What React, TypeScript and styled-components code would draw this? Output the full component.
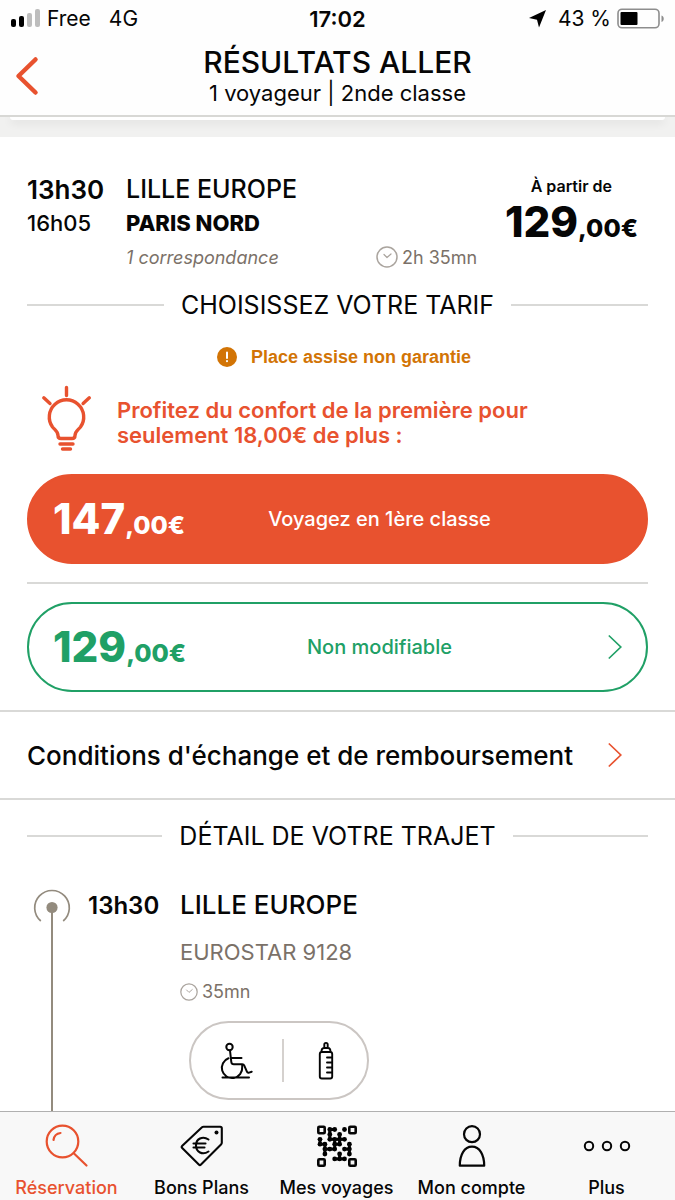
import React from "react";
import styled, { createGlobalStyle } from "styled-components";

const color = {
  orange: "#e8522f",
  green: "#20a066",
  amber: "#d27405",
  taupe: "#7b7168",
  rule: "#d9d9d7",
  ink: "#060606",
};

const GlobalStyle = createGlobalStyle`
  *, *::before, *::after { box-sizing: border-box; }
  body { margin: 0; background: #fff; color: ${color.ink}; font-family: Inter, "Liberation Sans", sans-serif; }
  h1, h2, h3, p { margin: 0; font-weight: 400; }
  button { font: inherit; color: inherit; border: 0; padding: 0; background: none; cursor: pointer; }
  a { color: inherit; text-decoration: none; }
  svg { display: block; flex: none; }
`;

const Screen = styled.div`
  display: flex;
  flex-direction: column;
  min-height: 100vh;
`;

const TopBar = styled.header`
  background: #fefefe;
  border-bottom: 2px solid #d8d8d5;
`;

const StatusBar = styled.div`
  display: grid;
  grid-template-columns: 1fr auto 1fr;
  align-items: center;
  height: 37px;
  padding: 0 10px;
  font-size: 21px;
`;

const StatusGroup = styled.div<{ $end?: boolean }>`
  display: flex;
  align-items: center;
  gap: 6px;
  justify-content: ${(p) => (p.$end ? "flex-end" : "flex-start")};
`;

const Network = styled.span`
  margin-left: 12px;
`;

const Clock = styled.time`
  font-size: 22px;
  font-weight: 600;
`;

const TitleBar = styled.div`
  display: grid;
  grid-template-columns: 48px 1fr 48px;
  align-items: center;
  height: 78px;
`;

const BackButton = styled.button`
  display: flex;
  justify-content: center;
  padding-left: 6px;
`;

const Heading = styled.div`
  text-align: center;
`;

const Title = styled.h1`
  font-size: 30px;
  line-height: 34px;
  font-weight: 500;
`;

const Subtitle = styled.p`
  font-size: 22px;
  line-height: 28px;
`;

const CardGap = styled.div`
  height: 20px;
  padding: 0 10px;
  overflow: hidden;
  background: #f1f1f0;
`;

const PreviousCard = styled.div`
  height: 3px;
  border-radius: 0 0 8px 8px;
  background: #fff;
  box-shadow: 0 2px 10px rgba(0, 0, 0, 0.14);
`;

const Main = styled.main`
  display: flex;
  flex: 1;
  flex-direction: column;
`;

const Offer = styled.section`
  padding: 35px 27px 18px;
  border-bottom: 2px solid ${color.rule};
`;

const Summary = styled.div`
  display: flex;
  justify-content: space-between;
`;

const Stops = styled.div`
  display: grid;
  grid-template-columns: 99px 250px auto;
  grid-template-rows: 34px 34px 34px;
  align-items: center;
`;

const Departure = styled.span<{ $bold?: boolean }>`
  font-size: ${(p) => (p.$bold ? 26 : 25)}px;
  font-weight: ${(p) => (p.$bold ? 600 : 500)};
`;

const Arrival = styled.span<{ $bold?: boolean }>`
  font-size: 22px;
  font-weight: ${(p) => (p.$bold ? 800 : 500)};
`;

const Connection = styled.span`
  grid-column: 2;
  font-size: 18px;
  font-style: italic;
  color: ${color.taupe};
`;

const Duration = styled.span`
  display: flex;
  align-items: center;
  gap: 4px;
  font-size: 18px;
  white-space: nowrap;
  color: ${color.taupe};
`;

const From = styled.div`
  display: flex;
  flex-direction: column;
  align-items: flex-end;
  padding: 4px 10px 0 0;
  margin-left: -60px;
`;

const FromLabel = styled.span`
  padding-right: 26px;
  font-size: 16px;
  line-height: 20px;
  font-weight: 600;
`;

const Price = styled.span`
  font-size: 42px;
  line-height: 52px;
  font-weight: 800;
  white-space: nowrap;
`;

const Cents = styled.span`
  font-size: 25px;
`;

const SectionTitle = styled.h2`
  display: flex;
  align-items: center;
  gap: 17px;
  font-size: 25px;
  line-height: 30px;
  white-space: nowrap;

  &::before,
  &::after {
    content: "";
    flex: 1;
    height: 2px;
    background: ${color.rule};
  }
`;

const TariffTitle = styled(SectionTitle)`
  margin-top: 16px;
`;

const Warning = styled.p`
  display: flex;
  align-items: center;
  justify-content: center;
  gap: 14px;
  margin-top: 26px;
  padding-left: 13px;
  font: 700 18px/22px "Liberation Sans", sans-serif;
  color: ${color.amber};
`;

const Promo = styled.div`
  display: flex;
  align-items: center;
  gap: 25px;
  margin: 17px 0 21px;
  padding-left: 13px;
`;

const PromoText = styled.p`
  padding-top: 8px;
  font-size: 22px;
  line-height: 25px;
  font-weight: 600;
  color: ${color.orange};
`;

const PromoIcon = styled.span`
  color: ${color.orange};
`;

const FareButton = styled.button<{ $filled?: boolean }>`
  display: grid;
  grid-template-columns: 150px 1fr 150px;
  align-items: center;
  width: 100%;
  height: 90px;
  padding: 0 24px;
  border: 2px solid ${(p) => (p.$filled ? color.orange : color.green)};
  border-radius: 45px;
  background: ${(p) => (p.$filled ? color.orange : "#fff")};
  color: ${(p) => (p.$filled ? "#fff" : color.green)};
  text-align: left;
`;

const FarePrice = styled(Price)`
  padding-top: 5px;
`;

const FareLabel = styled.span`
  font-size: 20px;
  font-weight: 500;
  text-align: center;
  padding-left: 60px;
  margin-right: -24px;
`;

const ChevronSlot = styled.span`
  justify-self: end;
`;

const Rule = styled.hr`
  height: 2px;
  margin: 18px 0;
  border: 0;
  background: ${color.rule};
`;

const Conditions = styled.a`
  display: flex;
  align-items: center;
  justify-content: space-between;
  height: 88px;
  padding: 0 53px 0 27px;
  border-bottom: 2px solid ${color.rule};
  font-size: 26px;
  font-weight: 500;
`;

const Journey = styled.section`
  display: flex;
  flex: 1;
  flex-direction: column;
  padding: 21px 27px 0;
`;

const Timeline = styled.div`
  display: grid;
  flex: 1;
  grid-template-columns: 50px 91px 1fr;
  gap: 0 6px;
  margin-top: 38px;
`;

const Track = styled.div`
  display: flex;
  flex-direction: column;
  align-items: center;
`;

const TrackLine = styled.div`
  flex: 1;
  width: 2px;
  background: #938b7e;
`;

const StepTime = styled.time`
  padding-left: 5px;
  font-size: 24px;
  line-height: 34px;
  font-weight: 600;
`;

const Step = styled.div`
  display: flex;
  flex-direction: column;
  align-items: flex-start;
  padding-bottom: 11px;
`;

const Station = styled.h3`
  font-size: 26px;
  line-height: 32px;
  font-weight: 500;
`;

const Train = styled.p`
  margin: 17px 0 15px;
  font-size: 22px;
  line-height: 28px;
  color: ${color.taupe};
`;

const Services = styled.div`
  display: grid;
  grid-template-columns: 91px 2px 1fr;
  align-items: center;
  justify-items: center;
  width: 180px;
  height: 79px;
  margin: 19px 0 0 9px;
  border: 2px solid #cbc6c3;
  border-radius: 40px;
`;

const Divider = styled.span`
  width: 2px;
  height: 43px;
  background: #d5d1ce;
`;

const TabBar = styled.nav`
  position: sticky;
  bottom: 0;
  display: grid;
  grid-template-columns: repeat(5, 1fr);
  height: 89px;
  border-top: 1px solid #b0b0b0;
  background: #f8f8f8;
`;

const Tab = styled.a<{ $active?: boolean }>`
  display: flex;
  flex-direction: column;
  align-items: center;
  gap: 8px;
  padding: 12px 2px 0 0;
  font-size: 18px;
  line-height: 24px;
  font-weight: 500;
  white-space: nowrap;
  color: ${(p) => (p.$active ? color.orange : color.ink)};
`;

const stroke = {
  fill: "none",
  stroke: "currentColor",
  strokeLinecap: "round" as const,
  strokeLinejoin: "round" as const,
};

const SignalIcon = () => (
  <svg width="31" height="20" viewBox="0 0 31 20" aria-hidden="true">
    <rect x="1" y="10" width="5" height="8" rx="2" />
    <rect x="9" y="7" width="5" height="11" rx="2" />
    <rect x="17" y="4" width="5" height="14" rx="2" fill="#bdbdbd" />
    <rect x="25" y="0" width="5" height="18" rx="2" fill="#bdbdbd" />
  </svg>
);

const LocationIcon = () => (
  <svg width="24" height="20" viewBox="0 0 24 20" aria-hidden="true">
    <path d="M18 1 11 18.5 9 10.700 1 9Z" />
  </svg>
);

const BatteryIcon = () => (
  <svg width="48" height="22" viewBox="0 0 48 22" aria-hidden="true">
    <rect x="1" y="1.2" width="41" height="18.6" rx="4" fill="none" stroke="#8d8d8d" strokeWidth="1.6" />
    <rect x="3.5" y="4" width="17" height="13" rx="1" />
    <path d="M44.5 7.5c3 1 3 5.5 0 6.5Z" fill="#8d8d8d" />
  </svg>
);

const BackIcon = () => (
  <svg width="24" height="40" viewBox="0 0 24 40" aria-hidden="true" {...stroke} stroke={color.orange} strokeWidth="4.5">
    <path d="M20.500 3.500 3.500 20l17 16.500" />
  </svg>
);

const ClockIcon = ({ size }: { size: number }) => (
  <svg width={size} height={size} viewBox="0 0 22 22" aria-hidden="true" {...stroke} stroke="#aaa49e">
    <circle cx="11" cy="11" r="10" strokeWidth="1.5" />
    <path d="m8 8.500 3 3 4-3.500" strokeWidth="1.2" />
  </svg>
);

const AlertIcon = () => (
  <svg width="20" height="20" viewBox="0 0 20 20" aria-hidden="true">
    <circle cx="10" cy="10" r="10" fill={color.amber} />
    <path d="M10 5.500v5.500M10 14v.3" stroke="#fff" strokeWidth="2" strokeLinecap="round" />
  </svg>
);

const BulbIcon = () => (
  <svg width="52" height="68" viewBox="0 0 52 68" aria-hidden="true" {...stroke} strokeWidth="3.4">
    <path d="M26.500 2.500v8M3.800 12.800l6.200 5.700M49.300 12.800l-6.200 5.700" />
    <path d="M21 53.500c-2 0-3-1-3-3 0-4-3-5.500-5.500-8.500a17.200 17.200 0 1 1 28 0c-2.500 3-5.500 4.500-5.500 8.500 0 2-1 3-3 3Z" />
    <path d="M20 59h13M22.500 64h8" />
  </svg>
);

const Chevron = ({ tint }: { tint: string }) => (
  <svg width="14" height="26" viewBox="0 0 14 26" aria-hidden="true" fill="none" stroke={tint} strokeWidth="1.7">
    <path d="m.8 1.500 12 11.500-12 11.500" />
  </svg>
);

const OriginIcon = () => (
  <svg width="38" height="36" viewBox="0 0 38 36" aria-hidden="true" fill="none" stroke="#938b7e">
    <path d="M7.800 32a17.300 17.300 0 1 1 22.400 0" strokeWidth="1.7" />
    <circle cx="19" cy="18.500" r="5.600" fill="#938b7e" stroke="none" />
    <path d="M19 20v16" strokeWidth="2" />
  </svg>
);

const WheelchairIcon = () => (
  <svg width="34" height="38" viewBox="0 0 34 38" role="img" aria-label="Accès fauteuil roulant" {...stroke} strokeWidth="2">
    <circle cx="9.500" cy="5" r="3.200" />
    <path d="M10 8.500 11.300 20c.2 1.600 1 2.300 2.500 2.300h8.500c1 0 1.600.4 2 1.300l2.600 6c.4 1 1.200 1.300 2.200 1l2.600-.9M11 16h10.500" />
    <path d="M8.500 16.300a10.200 10.200 0 1 0 13.700 8.700v-2M2.500 35.500h26.500" />
  </svg>
);

const BottleIcon = () => (
  <svg width="18" height="40" viewBox="0 0 18 40" role="img" aria-label="Espace bébé" {...stroke} strokeWidth="1.9">
    <rect x="2.800" y="11" width="12.400" height="26.500" rx="2" />
    <path d="M4.500 11c0-2.500.5-4 2.500-4h4c2 0 2.500 1.500 2.500 4M7.300 7V3.500c0-2.200 3.400-2.200 3.400 0V7M10 16.500h5M10 21.500h5M10 26.500h5M10 31.500h5" />
  </svg>
);

const SearchIcon = () => (
  <svg width="44" height="44" viewBox="0 0 44 44" aria-hidden="true" {...stroke} strokeWidth="2.2">
    <circle cx="17.500" cy="17.500" r="15.800" />
    <path d="m29 29.500 12.500 12M8.500 16c.5-4 3-6.500 7-7" />
  </svg>
);

const TagIcon = () => (
  <svg width="44" height="44" viewBox="0 0 44 44" aria-hidden="true" {...stroke} strokeWidth="2.1">
    <path d="M22 3.200 2.300 21.800c-.8.8-.8 1.500-.1 2.200l16.600 16.500c.8.8 1.500.7 2.200 0L41 20.500c.5-.5.8-1 .8-1.800V4.200c0-1-.5-1.500-1.500-1.500H23.500c-.6 0-1 .1-1.500.5Z" />
    <circle cx="36.500" cy="8.500" r="2" fill="currentColor" stroke="none" />
    <path d="M28.500 15.500c-6-4-12.500-.5-12.500 6s6.500 10 12.500 6M13.500 19.500h12M13.500 23.500h11" />
  </svg>
);

const qrRows = [
  "..##.#.",
  "..#.#..",
  "#.####.",
  "##.##.#",
  ".###.##",
  ".#..#.#",
  "...###.",
];

const QrIcon = () => (
  <svg width="42" height="44" viewBox="0 0 42 44" aria-hidden="true">
    <g {...stroke} strokeWidth="2.6">
      <rect x="2.3" y="2.800" width="6.400" height="6.400" rx="1" />
      <rect x="33.3" y="2.800" width="6.400" height="6.400" rx="1" />
      <rect x="2.3" y="35.300" width="6.400" height="6.400" rx="1" />
      <rect x="33.3" y="35.300" width="6.400" height="6.400" rx="1" />
    </g>
    {qrRows.map((row, y) =>
      row.split("").map((cell, x) => {
        if (cell !== "#") return null;
        const cx = 4 + x * 4.9;
        const cy = 5.5 + y * 4.9;
        return (
          <g key={`${x}-${y}`} stroke="currentColor" strokeWidth="3">
            <circle cx={cx} cy={cy} r="2.4" stroke="none" />
            {row[x + 1] === "#" && <path d={`M${cx} ${cy}h4.9`} />}
            {qrRows[y + 1]?.[x] === "#" && <path d={`M${cx} ${cy}v4.9`} />}
          </g>
        );
      }),
    )}
  </svg>
);

const PersonIcon = () => (
  <svg width="44" height="44" viewBox="0 0 44 44" aria-hidden="true" {...stroke} strokeWidth="2.2">
    <circle cx="22" cy="10.200" r="8" />
    <path d="M9.800 41.700h24.400c0-11-4.500-19-12.200-19s-12.200 8-12.200 19Z" />
  </svg>
);

const MoreIcon = () => (
  <svg width="48" height="44" viewBox="0 0 48 44" aria-hidden="true" {...stroke} strokeWidth="2">
    <circle cx="6" cy="22" r="4.200" />
    <circle cx="24" cy="22" r="4.200" />
    <circle cx="42" cy="22" r="4.200" />
  </svg>
);

const tabs = [
  { label: "Réservation", Icon: SearchIcon },
  { label: "Bons Plans", Icon: TagIcon },
  { label: "Mes voyages", Icon: QrIcon },
  { label: "Mon compte", Icon: PersonIcon },
  { label: "Plus", Icon: MoreIcon },
];

export default function App() {
  return (
    <Screen>
      <GlobalStyle />
      <TopBar>
        <StatusBar>
          <StatusGroup>
            <SignalIcon />
            <span>Free</span>
            <Network>4G</Network>
          </StatusGroup>
          <Clock>17:02</Clock>
          <StatusGroup $end>
            <LocationIcon />
            <span>43 %</span>
            <BatteryIcon />
          </StatusGroup>
        </StatusBar>
        <TitleBar>
          <BackButton type="button" aria-label="Retour">
            <BackIcon />
          </BackButton>
          <Heading>
            <Title>RÉSULTATS ALLER</Title>
            <Subtitle>1 voyageur | 2nde classe</Subtitle>
          </Heading>
        </TitleBar>
      </TopBar>
      <CardGap>
        <PreviousCard />
      </CardGap>
      <Main>
        <Offer>
          <Summary>
            <Stops>
              <Departure $bold>13h30</Departure>
              <Departure>LILLE EUROPE</Departure>
              <span />
              <Arrival>16h05</Arrival>
              <Arrival $bold>PARIS NORD</Arrival>
              <span />
              <Connection>1 correspondance</Connection>
              <Duration>
                <ClockIcon size={22} />
                2h 35mn
              </Duration>
            </Stops>
            <From>
              <FromLabel>À partir de</FromLabel>
              <Price>
                129<Cents>,00€</Cents>
              </Price>
            </From>
          </Summary>
          <TariffTitle>CHOISISSEZ VOTRE TARIF</TariffTitle>
          <Warning>
            <AlertIcon />
            Place assise non garantie
          </Warning>
          <Promo>
            <PromoIcon>
              <BulbIcon />
            </PromoIcon>
            <PromoText>
              Profitez du confort de la première pour
              <br />
              seulement 18,00€ de plus :
            </PromoText>
          </Promo>
          <FareButton type="button" $filled>
            <FarePrice>
              147<Cents>,00€</Cents>
            </FarePrice>
            <FareLabel>Voyagez en 1ère classe</FareLabel>
          </FareButton>
          <Rule />
          <FareButton type="button">
            <FarePrice>
              129<Cents>,00€</Cents>
            </FarePrice>
            <FareLabel>Non modifiable</FareLabel>
            <ChevronSlot>
              <Chevron tint={color.green} />
            </ChevronSlot>
          </FareButton>
        </Offer>
        <Conditions href="#conditions">
          Conditions d'échange et de remboursement
          <Chevron tint={color.orange} />
        </Conditions>
        <Journey>
          <SectionTitle>DÉTAIL DE VOTRE TRAJET</SectionTitle>
          <Timeline>
            <Track>
              <OriginIcon />
              <TrackLine />
            </Track>
            <StepTime>13h30</StepTime>
            <Step>
              <Station>LILLE EUROPE</Station>
              <Train>EUROSTAR 9128</Train>
              <Duration>
                <ClockIcon size={18} />
                35mn
              </Duration>
              <Services>
                <WheelchairIcon />
                <Divider />
                <BottleIcon />
              </Services>
            </Step>
          </Timeline>
        </Journey>
      </Main>
      <TabBar>
        {tabs.map(({ label, Icon }, i) => (
          <Tab key={label} href="#" $active={i === 0}>
            <Icon />
            {label}
          </Tab>
        ))}
      </TabBar>
    </Screen>
  );
}
